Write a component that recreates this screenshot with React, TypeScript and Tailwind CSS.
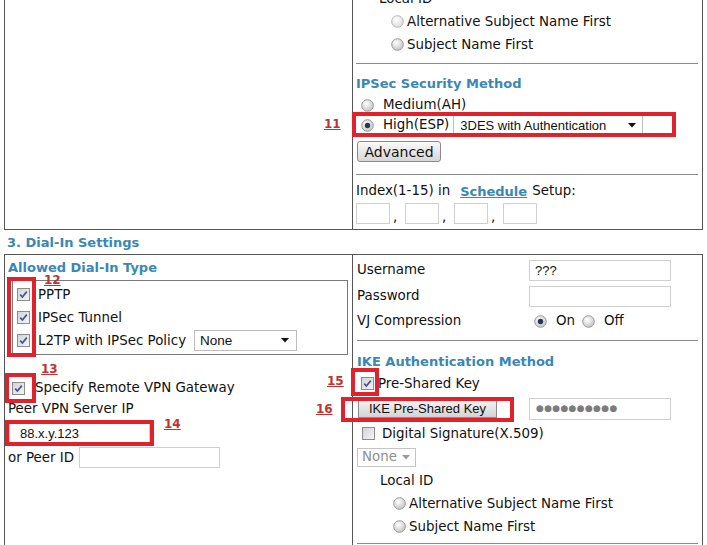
import React, { useId } from "react";

const BLUE = "text-[#3a87b5]";

function Radio({ checked = false, light = false }: { checked?: boolean; light?: boolean }) {
  const id = useId();
  return (
    <svg width="13" height="13" viewBox="0 0 13 13" className="shrink-0">
      <defs>
        <radialGradient id={id} cx="0.4" cy="0.35" r="0.75">
          <stop offset="0" stopColor="#ffffff" />
          <stop offset="1" stopColor={light ? "#d8d8d8" : "#bdbdbd"} />
        </radialGradient>
      </defs>
      <circle cx="6.5" cy="6.5" r="5.8" fill={`url(#${id})`} stroke={light ? "#b8b8b8" : "#9a9a9a"} strokeWidth="1" />
      {checked && <circle cx="6.5" cy="6.5" r="2.7" fill="#24385a" />}
    </svg>
  );
}

function Check({ checked = false }: { checked?: boolean }) {
  return (
    <span className="w-[13px] h-[13px] shrink-0 border border-[#8c8c8c] bg-gradient-to-br from-[#d2d4da] to-[#f4f4f6] flex items-center justify-center">
      {checked && (
        <svg width="9" height="9" viewBox="0 0 9 9">
          <path d="M1.2 4.6 L3.4 7 L7.8 1.6" stroke="#46568a" strokeWidth="1.7" fill="none" />
        </svg>
      )}
    </span>
  );
}

function Arrow({ color = "#111" }: { color?: string }) {
  return (
    <svg width="8" height="5" viewBox="0 0 8 5" className="shrink-0">
      <path d="M0 0 L8 0 L4 4.5 Z" fill={color} />
    </svg>
  );
}

function Box({ className = "" }: { className?: string }) {
  return <div className={`border-[4px] border-[#e0232b] absolute ${className}`} />;
}

function Num({ children, className = "" }: { children: React.ReactNode; className?: string }) {
  return (
    <span className={`absolute text-[12px] leading-none font-bold underline text-[#c2312f] font-['DejaVu_Sans',sans-serif] ${className}`}>
      {children}
    </span>
  );
}

const ARIAL = "font-['Liberation_Sans',Arial,sans-serif]";

function Input({ className = "", children }: { className?: string; children?: React.ReactNode }) {
  return (
    <div className={`border border-[#cfcfcf] bg-white flex items-center text-[13px] ${ARIAL} ${className}`}>
      {children}
    </div>
  );
}

export default function App() {
  return (
    <div className="relative w-[707px] h-[545px] overflow-hidden bg-white text-[13.4px] text-[#111] font-['DejaVu_Sans',sans-serif] leading-none">
      {/* Top table */}
      <div className="-mt-[13px] ml-[4px] w-[699px] flex border-l border-r border-b border-[#555]">
        <div className="w-[348px] border-r border-[#555]" />
        <div className="flex-1 pl-[3px] pr-[4px] pb-[5px] flex flex-col">
          <div className="h-[23px] pl-[23px] flex items-center">Local ID</div>
          <div className="h-[23px] pl-[35px] flex items-center gap-[3px]">
            <Radio light />
            <span>Alternative Subject Name First</span>
          </div>
          <div className="h-[23px] pl-[35px] flex items-center gap-[3px]">
            <Radio />
            <span>Subject Name First</span>
          </div>
          <div className="mt-[7px] border-t border-[#8a8a8a]" />
          <div className={`mt-[8px] h-[23px] flex items-center font-bold text-[13px] ${BLUE}`}>IPSec Security Method</div>
          <div className="h-[20px] pl-[5px] flex items-center gap-[9px]">
            <Radio />
            <span>Medium(AH)</span>
          </div>
          <div className="h-[20px] pl-[5px] flex items-center">
            <Radio checked />
            <span className="ml-[9px]">High(ESP)</span>
            <div className={`ml-[4px] w-[190px] h-[21px] border-l border-r border-[#bdbdbd] bg-white flex items-center pl-[6px] pr-[6px] text-[13px] ${ARIAL}`}>
              <span className="flex-1">3DES with Authentication</span>
              <Arrow />
            </div>
          </div>
          <div className="mt-[6px] ml-[1px] w-[84px] h-[21px] border border-[#8a8a8a] rounded-[3px] bg-gradient-to-b from-[#fafafa] to-[#d6d6d6] flex items-center justify-center text-[14px]">
            Advanced
          </div>
          <div className="mt-[12px] border-t border-[#8a8a8a]" />
          <div className="mt-[6px] h-[20px] flex items-center">
            <span>Index(1-15) in</span>
            <span className={`ml-[10px] font-bold underline text-[13px] ${BLUE}`}>Schedule</span>
            <span className="ml-[5px]">Setup:</span>
          </div>
          <div className="mt-[2px] h-[21px] flex">
            <Input className="w-[34px] h-[21px]" />
            <span className="w-[15px] pl-[3px] flex items-end pb-[1px]">,</span>
            <Input className="w-[34px] h-[21px]" />
            <span className="w-[15px] pl-[3px] flex items-end pb-[1px]">,</span>
            <Input className="w-[34px] h-[21px]" />
            <span className="w-[15px] pl-[3px] flex items-end pb-[1px]">,</span>
            <Input className="w-[34px] h-[21px]" />
          </div>
        </div>
      </div>

      {/* Dial-In heading */}
      <div className={`h-[24px] pl-[7px] flex items-center font-bold text-[13px] ${BLUE}`}>3. Dial-In Settings</div>

      {/* Second table */}
      <div className="ml-[4px] w-[699px] h-[400px] flex border-l border-r border-t border-[#555]">
        {/* Left column */}
        <div className="w-[348px] border-r border-[#555] flex flex-col">
          <div className={`h-[25px] pl-[3px] flex items-center font-bold text-[13px] ${BLUE}`}>Allowed Dial-In Type</div>
          <div className="ml-[7px] w-[336px] border border-[#7a7a7a] pt-[2px] pb-[2px] pl-[4px] flex flex-col">
            <div className="h-[23px] flex items-center gap-[8px]">
              <Check checked />
              <span>PPTP</span>
            </div>
            <div className="h-[23px] flex items-center gap-[8px]">
              <Check checked />
              <span>IPSec Tunnel</span>
            </div>
            <div className="h-[23px] flex items-center gap-[8px]">
              <Check checked />
              <span>L2TP with IPSec Policy</span>
              <div className={`w-[103px] h-[21px] border border-[#bdbdbd] bg-white flex items-center pl-[5px] pr-[7px] text-[13.5px] ${ARIAL}`}>
                <span className="flex-1">None</span>
                <Arrow />
              </div>
            </div>
          </div>
          <div className="mt-[22px] h-[22px] pl-[7px] flex items-center gap-[10px]">
            <Check checked />
            <span>Specify Remote VPN Gateway</span>
          </div>
          <div className="h-[20px] pl-[3px] flex items-center">Peer VPN Server IP</div>
          <div className="mt-[3px] ml-[4px]">
            <Input className="w-[141px] h-[22px] pl-[10px]">88.x.y.123</Input>
          </div>
          <div className="mt-[2px] h-[23px] pl-[3px] flex items-center">
            <span className="w-[71px]">or Peer ID</span>
            <Input className="w-[141px] h-[21px]" />
          </div>
        </div>

        {/* Right column */}
        <div className="flex-1 pl-[4px] pr-[4px] pt-[2px] flex flex-col">
          <div className="h-[26px] flex items-center">
            <span className="w-[172px]">Username</span>
            <Input className="w-[142px] h-[21px] pl-[5px]">???</Input>
          </div>
          <div className="h-[26px] flex items-center">
            <span className="w-[172px]">Password</span>
            <Input className="w-[142px] h-[21px]" />
          </div>
          <div className="h-[24px] flex items-center">
            <span className="w-[177px]">VJ Compression</span>
            <Radio checked />
            <span className="ml-[9px]">On</span>
            <span className="ml-[7px]">
              <Radio />
            </span>
            <span className="ml-[9px]">Off</span>
          </div>
          <div className="mt-[7px] border-t border-[#8a8a8a]" />
          <div className={`mt-[9px] h-[22px] flex items-center font-bold text-[13px] ${BLUE}`}>IKE Authentication Method</div>
          <div className="h-[23px] pl-[4px] flex items-center gap-[4px]">
            <Check checked />
            <span>Pre-Shared Key</span>
          </div>
          <div className="h-[27px] flex items-center">
            <div className="w-[172px] pl-[1px]">
              <div className={`w-[139px] h-[19px] border border-[#8a8a8a] bg-gradient-to-b from-[#f4f4f4] to-[#d4d4d4] flex items-center justify-center text-[13px] ${ARIAL}`}>
                IKE Pre-Shared Key
              </div>
            </div>
            <Input className="w-[142px] h-[22px] pl-[6px]">
              <span className="text-[#7c7c7c] text-[9px] tracking-[0.3px] font-['DejaVu_Sans',sans-serif]">●●●●●●●●●●</span>
            </Input>
          </div>
          <div className="h-[23px] pl-[5px] flex items-center gap-[7px]">
            <Check />
            <span>Digital Signature(X.509)</span>
          </div>
          <div className="h-[24px] flex items-center">
            <div className="w-[59px] h-[19px] border border-[#c4c4c4] bg-white flex items-center pl-[4px] pr-[5px] text-[#8f8f8f]">
              <span className="flex-1">None</span>
              <Arrow color="#9a9a9a" />
            </div>
          </div>
          <div className="h-[23px] pl-[23px] flex items-center">Local ID</div>
          <div className="h-[23px] pl-[36px] flex items-center gap-[3px]">
            <Radio />
            <span>Alternative Subject Name First</span>
          </div>
          <div className="h-[23px] pl-[36px] flex items-center gap-[3px]">
            <Radio />
            <span>Subject Name First</span>
          </div>
          <div className="mt-[5px] border-t border-[#8a8a8a]" />
        </div>
      </div>

      {/* Annotations */}
      <Box className="left-[352px] top-[112px] w-[324px] h-[25px]" />
      <Num className="left-[324px] top-[118px]">11</Num>
      <Box className="left-[7px] top-[277px] w-[29px] h-[80px]" />
      <Num className="left-[44px] top-[274px]">12</Num>
      <Box className="left-[5px] top-[373px] w-[31px] h-[30px]" />
      <Num className="left-[41px] top-[363px]">13</Num>
      <Box className="left-[5px] top-[420px] w-[149px] h-[26px]" />
      <Num className="left-[164px] top-[418px]">14</Num>
      <Box className="left-[351px] top-[368px] w-[28px] h-[28px]" />
      <Num className="left-[327px] top-[375px]">15</Num>
      <Box className="left-[341px] top-[397px] w-[173px] h-[25px]" />
      <Num className="left-[316px] top-[403px]">16</Num>
    </div>
  );
}
